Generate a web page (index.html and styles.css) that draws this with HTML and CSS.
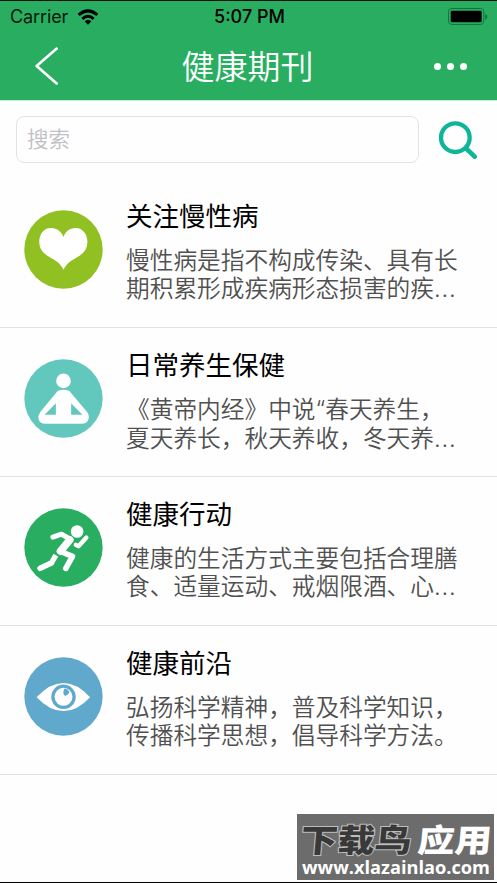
FILE: index.html
```html
<!DOCTYPE html>
<html lang="zh-CN">
<head>
<meta charset="utf-8">
<title>健康期刊</title>
<link rel="stylesheet" href="styles.css">
</head>
<body>
<div class="screen">
  <header class="header">
    <div class="status">
      <div class="carrier"><span>Carrier</span>
        <svg class="wifi" viewBox="0 0 66 48"><path d="M2 14Q33-12 64 14L58 21Q33 0 8 21Z"/><path d="M13 26Q33 8 53 26L47 33Q33 20 19 33Z"/><path d="M23 37Q33 29 43 37L33 47Z"/></svg>
      </div>
      <div class="time">5:07 PM</div>
      <svg class="battery" viewBox="0 0 120 52"><rect x="1.5" y="1.5" width="106" height="48" rx="10" fill="none" stroke="#12733a" stroke-width="3"/><rect x="8" y="8" width="93" height="35" rx="4"/><path d="M112 17Q118 20 118 26T112 35Z" fill="#12733a"/></svg>
    </div>
    <nav class="nav">
      <svg class="back" viewBox="0 0 70 114"><path d="M66 4L5 57L66 110" fill="none" stroke="#fff" stroke-width="8" stroke-linecap="round" stroke-linejoin="round"/></svg>
      <h1 class="nav-title">健康期刊</h1>
      <div class="more"><i></i><i></i><i></i></div>
    </nav>
  </header>
  <div class="search">
    <div class="field">搜索</div>
    <svg class="lens" viewBox="0 0 114 114"><circle cx="49" cy="50" r="43" fill="none" stroke="#0fb598" stroke-width="13"/><path d="M80 81L107 107" stroke="#0fb598" stroke-width="14" stroke-linecap="round"/></svg>
  </div>
  <main class="list">
    <article class="row">
      <svg class="icon" viewBox="41 45 238 238"><circle cx="160" cy="164" r="118" fill="#90c021"/><path d="M160 126C151 105 136 99 121 99C101 99 87 118 87 140C87 165 101 177 119 187C140 199 150 205 160 225C170 205 180 199 201 187C219 177 232 165 232 140C232 118 217 99 198 99C183 99 168 105 160 126Z" fill="#fff"/></svg>
      <div class="text"><h2>关注慢性病</h2><p>慢性病是指不构成传染、具有长<br>期积累形成疾病形态损害的疾<span class="dots">...</span></p></div>
    </article>
    <article class="row">
      <svg class="icon" viewBox="41 42 238 238"><circle cx="160" cy="161" r="118" fill="#62c8be"/><circle cx="160" cy="108" r="22" fill="#fff"/><path fill="#fff" fill-rule="evenodd" d="M143 138Q160 131 177 138L231 202Q239 213 235 224Q230 237 215 237H105Q90 237 85 224Q82 213 90 202ZM137 175L103 210H137ZM183 175V210H217Z"/></svg>
      <div class="text"><h2>日常养生保健</h2><p>《黄帝内经》中说<span class="quote">“</span>春天养生，<br>夏天养长，秋天养收，冬天养<span class="dots">...</span></p></div>
    </article>
    <article class="row">
      <svg class="icon" viewBox="41 38 238 238"><circle cx="160" cy="157" r="118" fill="#29ae61"/><circle cx="201" cy="109" r="19" fill="#fff"/><g fill="none" stroke="#fff" stroke-linecap="round" stroke-linejoin="round"><path d="M128 126L154 117L180 132" stroke-width="15"/><path d="M179 134L151 168" stroke-width="23"/><path d="M151 169L187 184L167 220" stroke-width="17"/><path d="M197 149L205 153L229 127" stroke-width="13"/><path d="M137 180L124 203L89 220" stroke-width="16" stroke-linecap="butt"/><path d="M124 203L89 220" stroke-width="16"/></g></svg>
      <div class="text"><h2>健康行动</h2><p>健康的生活方式主要包括合理膳<br>食、适量运动、戒烟限酒、心<span class="dots">...</span></p></div>
    </article>
    <article class="row">
      <svg class="icon" viewBox="41 51 238 238"><circle cx="160" cy="170" r="118" fill="#60a9cd"/><path d="M79 172Q119 129 160 129T240 172Q201 214 160 214T79 172Z" fill="#fff"/><circle cx="160" cy="171" r="32" fill="#fff" stroke="#60a9cd" stroke-width="10"/><path d="M163 146Q156 160 163 167Q172 170 178 156L171 148Z" fill="#60a9cd"/></svg>
      <div class="text"><h2>健康前沿</h2><p>弘扬科学精神，普及科学知识，<br>传播科学思想，倡导科学方法。</p></div>
    </article>
  </main>
  <aside class="watermark">
    <svg viewBox="0 0 197 66"><g class="brand" transform="translate(4 0) skewX(-5)"><text x="2" y="38" textLength="111" lengthAdjust="spacingAndGlyphs" class="dark">下载鸟</text><text x="119" y="38" textLength="74" lengthAdjust="spacingAndGlyphs" class="light">应用</text></g><text x="5" y="60" textLength="188" lengthAdjust="spacingAndGlyphs" class="url">www.xlazainlao.com</text></svg>
  </aside>
</div>
</body>
</html>
```
FILE: styles.css
```css
* { box-sizing: border-box; }
body { margin: 0; background: #fefefe; font-family: "Noto Sans CJK SC", sans-serif; }
h1, h2, p { margin: 0; }
svg { display: block; flex: none; }
.screen { position: relative; width: 497px; height: 883px; overflow: hidden; background: #fefefe; border-bottom: 1px solid #000; }
.header { height: 101px; border-top: 1px solid #111; border-bottom: 1px solid #bff2d7; background: #29ae61; }
.status { display: grid; grid-template-columns: 1fr auto 1fr; align-items: center; height: 32px; padding: 0 9px 0 10px; font: 18px/32px Inter, sans-serif; color: #06170d; }
.carrier { display: flex; align-items: center; gap: 9px; }
.carrier span { letter-spacing: -.1px; }
.wifi { width: 22px; height: 16px; fill: #000; }
.time { font-weight: 500; font-size: 18px; color: #000; padding-left: 1px; }
.battery { width: 40px; height: 17.3px; justify-self: end; }
.nav { display: flex; align-items: center; justify-content: space-between; height: 66px; padding: 0 30px 0 35px; }
.back { width: 23px; height: 38px; }
.nav-title { padding-left: 3px; margin-top: -3px; font-size: 33px; line-height: 66px; font-weight: 350; color: #fff; }
.more { display: flex; gap: 6px; }
.more i { width: 7px; height: 7px; border-radius: 50%; background: #fff; }
.search { display: flex; align-items: center; gap: 20px; height: 77.5px; padding-left: 16px; }
.field { width: 403px; height: 47px; border: 1px solid #e3e3e5; border-radius: 8px; padding-left: 10px; font-size: 21.5px; line-height: 42px; font-weight: 350; color: #c0c1c5; }
.lens { width: 38px; height: 38px; }
.row { display: flex; height: 149px; padding: 31.5px 0 0 23.5px; gap: 23.5px; border-bottom: 1.5px solid #e2e2e2; }
.icon { width: 79px; height: 79px; }
.text { margin-top: -13px; white-space: nowrap; }
.text h2 { font-size: 26.5px; line-height: 36px; font-weight: 400; color: #000; }
.text p { margin-top: 13px; font-size: 23.7px; line-height: 27.5px; font-weight: 350; color: #505050; }
.dots { font-family: Inter, sans-serif; letter-spacing: .8px; }
.quote { font-family: Inter, sans-serif; }
.watermark { position: absolute; left: 297px; top: 814px; width: 197px; height: 66px; background: #6c6c6c; }
.watermark svg { width: 197px; height: 66px; }
.brand { font-size: 32px; font-weight: 900; paint-order: stroke; }
.dark { fill: #393939; stroke: #bdbdbd; stroke-width: 2px; }
.light { fill: #fff; }
.url { font: 700 18px "Open Sans", sans-serif; fill: #fff; }
```
